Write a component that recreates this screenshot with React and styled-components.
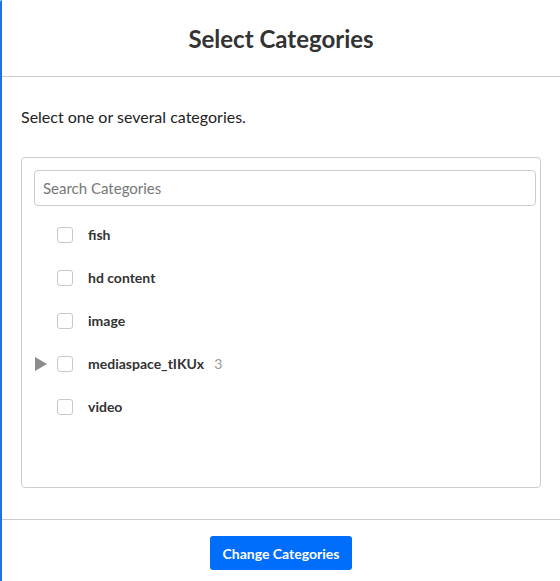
import React, { useState } from 'react'
import styled, { createGlobalStyle } from 'styled-components'

const GlobalStyle = createGlobalStyle`
  html, body {
    margin: 0;
    padding: 0;
    background: #fff;
  }
  body {
    font-family: Lato, "Noto Sans", sans-serif;
    color: #333;
  }
`

const Modal = styled.div`
  width: 560px;
  height: 581px;
  box-sizing: border-box;
  border-left: 2px solid #1a73e8;
  border-top-left-radius: 2px;
  display: flex;
  flex-direction: column;
  background: #fff;
`

const Header = styled.div`
  height: 76px;
  display: flex;
  align-items: center;
  justify-content: center;
  border-bottom: 1px solid #cccccc;
  flex-shrink: 0;
`

const Title = styled.h2`
  margin: 0;
  font-size: 24px;
  font-weight: 700;
  color: #333;
  padding-top: 1px;
`

const Body = styled.div`
  flex: 1;
  padding: 30px 19px 31px 19px;
  display: flex;
  flex-direction: column;
`

const Intro = styled.p`
  margin: 0 0 30px 0;
  font-size: 16px;
  line-height: 20px;
  color: #222;
`

const Panel = styled.div`
  border: 1px solid #cccccc;
  border-radius: 4px;
  padding: 12px 4px 12px 12px;
  flex: 1;
`

const Search = styled.input`
  width: 100%;
  height: 36px;
  box-sizing: border-box;
  border: 1px solid #cccccc;
  border-radius: 4px;
  padding: 0 8px;
  font-family: Lato, sans-serif;
  font-size: 15px;
  color: #333;
  outline: none;
  &::placeholder {
    color: #777;
  }
`

const List = styled.ul`
  list-style: none;
  margin: 7px 0 0 0;
  padding: 0;
`

const Row = styled.li`
  height: 43px;
  display: flex;
  align-items: center;
`

const Toggle = styled.span`
  width: 22px;
  display: flex;
  align-items: center;
  justify-content: flex-start;
  padding-left: 1px;
`

const Box = styled.span`
  width: 16px;
  height: 16px;
  box-sizing: border-box;
  border: 1px solid #c8c8c8;
  border-radius: 3px;
  background: #fff;
  margin-right: 15px;
  flex-shrink: 0;
`

const Label = styled.span`
  font-size: 14px;
  font-weight: 700;
  color: #333;
`

const Count = styled.span`
  font-size: 14px;
  color: #999;
  margin-left: 10px;
`

const Footer = styled.div`
  height: 62px;
  border-top: 1px solid #cccccc;
  display: flex;
  justify-content: center;
  align-items: flex-start;
  padding-top: 16px;
  box-sizing: border-box;
  flex-shrink: 0;
`

const Button = styled.button`
  height: 34px;
  padding: 0 13px;
  border: none;
  border-radius: 3px;
  background: #006efa;
  color: #fff;
  font-family: Lato, sans-serif;
  font-size: 14px;
  font-weight: 700;
  cursor: pointer;
`

const Arrow = () => (
  <svg width="12" height="14" viewBox="0 0 12 14">
    <polygon points="0,0 12,7 0,14" fill="#8c8c8c" />
  </svg>
)

const categories = [
  { name: 'fish' },
  { name: 'hd content' },
  { name: 'image' },
  { name: 'mediaspace_tIKUx', count: 3 },
  { name: 'video' },
]

export default function App() {
  const [query, setQuery] = useState('')
  return (
    <>
      <GlobalStyle />
      <Modal>
        <Header>
          <Title>Select Categories</Title>
        </Header>
        <Body>
          <Intro>Select one or several categories.</Intro>
          <Panel>
            <Search
              placeholder="Search Categories"
              value={query}
              onChange={(e) => setQuery(e.target.value)}
            />
            <List>
              {categories.map((c) => (
                <Row key={c.name}>
                  <Toggle>{c.count ? <Arrow /> : null}</Toggle>
                  <Box />
                  <Label>{c.name}</Label>
                  {c.count ? <Count>{c.count}</Count> : null}
                </Row>
              ))}
            </List>
          </Panel>
        </Body>
        <Footer>
          <Button>Change Categories</Button>
        </Footer>
      </Modal>
    </>
  )
}
